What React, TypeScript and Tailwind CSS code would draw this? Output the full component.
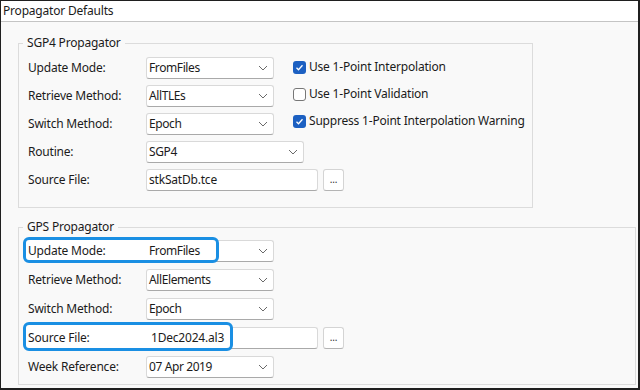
import type { ReactNode } from "react";

function Chevron() {
  return (
    <svg width="10" height="6" viewBox="0 0 10 6" className="ml-auto mr-[5px] shrink-0">
      <polyline points="1,1 5,5 9,1" fill="none" stroke="#6a6a6a" strokeWidth="1" />
    </svg>
  );
}

function Dropdown({ value, width = "w-[128px]", raised }: { value: string; width?: string; raised?: boolean }) {
  return (
    <div className={`${width} h-[22px] bg-white border border-[#d9d9d9] border-b-[#a9a9a9] rounded-[3px] flex items-center pl-[2px] tracking-[-0.4px]`}>
      <span className={raised ? "relative z-10" : ""}>{value}</span>
      <Chevron />
    </div>
  );
}

function FileInput({ value, raised }: { value: string; raised?: boolean }) {
  return (
    <div className="flex items-center">
      <div className="w-[172px] h-[22px] bg-white border border-[#d9d9d9] border-b-[#a9a9a9] rounded-[3px] flex items-center pl-[2px]">
        <span className={raised ? "relative z-10 pl-[2px]" : ""}>{value}</span>
      </div>
      <button className="ml-[5px] w-[21px] h-[22px] bg-white border border-[#d4d4d4] border-b-[#b4b4b4] rounded-[3px] flex items-center justify-center text-[10px] leading-none pb-[2px] text-[#333]">
        ...
      </button>
    </div>
  );
}

function Row({ label, children, highlight }: { label: string; children: ReactNode; highlight?: "mode" | "file" }) {
  return (
    <div className="relative h-[22px] flex items-center">
      {highlight === "mode" && (
        <div className="absolute left-[-5px] top-[-3px] w-[196px] h-[26px] border-[3px] border-[#1a8fe3] rounded-[6px] bg-white" />
      )}
      {highlight === "file" && (
        <div className="absolute left-[-5px] top-[-5px] w-[210px] h-[29px] border-[3px] border-[#1a8fe3] rounded-[6px] bg-white" />
      )}
      <span className={`w-[118px] shrink-0 ${highlight ? "relative z-10" : ""}`}>{label}</span>
      {children}
    </div>
  );
}

function Check({ label, checked }: { label: string; checked?: boolean }) {
  return (
    <div className="h-[20px] flex items-center whitespace-nowrap">
      {checked ? (
        <div className="w-[13px] h-[13px] shrink-0 rounded-[3px] bg-[#1c60c2] flex items-center justify-center">
          <svg width="11" height="11" viewBox="0 0 11 11">
            <polyline points="2.5,5.8 4.5,7.8 8.5,3.3" fill="none" stroke="white" strokeWidth="1.3" />
          </svg>
        </div>
      ) : (
        <div className="w-[13px] h-[13px] shrink-0 rounded-[3px] bg-white border border-[#777]" />
      )}
      <span className="ml-[3px]">{label}</span>
    </div>
  );
}

export default function App() {
  return (
    <div className="w-[640px] h-[390px] overflow-hidden border-t border-l border-r-2 border-b-2 border-[#1f1f1f] bg-[#f9f9f9] flex flex-col text-[12px] tracking-[-0.2px] text-[#1b1b1b] font-['Noto_Sans','Open_Sans',sans-serif]">
      <div className="h-[21px] shrink-0 bg-white border-b border-[#c4c4c4] flex items-center pl-[2px]">
        Propagator Defaults
      </div>

      <div className="flex-1 pl-[17px] pt-[13px] flex flex-col">
        {/* SGP4 */}
        <fieldset className="w-[515px] border border-[#dcdcdc] pl-[9px] pt-[6px] pb-[16px]">
          <legend className="-ml-[5px] px-[4px] leading-[16px]">SGP4 Propagator</legend>
          <div className="flex flex-col gap-[6px]">
            <div className="flex">
              <div className="flex flex-col gap-[6px] shrink-0">
                <Row label="Update Mode:"><Dropdown value="FromFiles" /></Row>
                <Row label="Retrieve Method:"><Dropdown value="AllTLEs" /></Row>
                <Row label="Switch Method:"><Dropdown value="Epoch" /></Row>
              </div>
              <div className="ml-[19px] flex flex-col gap-[7px] shrink-0">
                <Check label="Use 1-Point Interpolation" checked />
                <Check label="Use 1-Point Validation" />
                <Check label="Suppress 1-Point Interpolation Warning" checked />
              </div>
            </div>
            <Row label="Routine:"><Dropdown value="SGP4" width="w-[158px]" /></Row>
            <Row label="Source File:"><FileInput value="stkSatDb.tce" /></Row>
          </div>
        </fieldset>

        {/* GPS */}
        <fieldset className="mt-[11px] w-[618px] border border-[#dcdcdc] pl-[9px] pt-[5px] pb-[6px]">
          <legend className="-ml-[5px] px-[4px] leading-[16px]">GPS Propagator</legend>
          <div className="flex flex-col gap-[7px]">
            <Row label="Update Mode:" highlight="mode"><Dropdown value="FromFiles" raised /></Row>
            <Row label="Retrieve Method:"><Dropdown value="AllElements" /></Row>
            <Row label="Switch Method:"><Dropdown value="Epoch" /></Row>
            <Row label="Source File:" highlight="file"><FileInput value="1Dec2024.al3" raised /></Row>
            <Row label="Week Reference:"><Dropdown value="07 Apr 2019" /></Row>
          </div>
        </fieldset>
      </div>
    </div>
  );
}
